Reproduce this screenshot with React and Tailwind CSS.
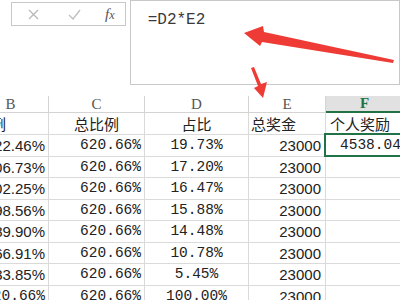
import React from "react";

const mono = { fontFamily: '"Liberation Mono", monospace' };

const rows = [
  { b: "122.46%", d: "19.73%", f: "4538.04" },
  { b: "106.73%", d: "17.20%" },
  { b: "102.25%", d: "16.47%" },
  { b: "98.56%", d: "15.88%" },
  { b: "89.90%", d: "14.48%" },
  { b: "66.91%", d: "10.78%" },
  { b: "33.85%", d: "5.45%" },
  { b: "620.66%", bMono: true, d: "100.00%" },
];
const heights = ["h-[22px]", "h-[21px]", "h-[22px]", "h-[21px]", "h-[22px]", "h-[21px]", "h-[22px]", "h-[22px]"];

export default function App() {
  return (
    <div className="relative w-[400px] h-[300px] overflow-hidden bg-white text-[#222]" style={{ fontFamily: '"Liberation Sans", "Noto Sans CJK SC", sans-serif' }}>
      {/* toolbar */}
      <div className="flex items-start h-[85px]">
        <div className="ml-[11px] mt-[2px] w-[119px] h-[24px] border border-[#c8c8c8] flex items-center">
          <svg className="ml-[16px]" width="11" height="11" viewBox="0 0 11 11">
            <path d="M1 1 L10 10 M10 1 L1 10" stroke="#b8b8b8" strokeWidth="1.3" fill="none" />
          </svg>
          <svg className="ml-[29px]" width="13" height="11" viewBox="0 0 13 11">
            <path d="M1 6 L5 10 L12 1" stroke="#c0c0c0" strokeWidth="1.4" fill="none" />
          </svg>
          <span className="ml-[24px] italic text-[15px] leading-none text-[#555]" style={{ fontFamily: '"Liberation Serif", serif' }}>
            f<span className="text-[12px]">x</span>
          </span>
        </div>
        <div className="ml-[4px] w-[280px] h-[85px] border border-[#c8c8c8] pl-[17px] pt-[6px]">
          <span className="text-[16px] leading-[18px] text-[#3a3a3a]" style={mono}>=D2*E2</span>
        </div>
      </div>

      {/* grid */}
      <div className="mt-[11px] -ml-[27px]">
        <div className="flex h-[17px] text-[15px] leading-none text-[#555]" style={{ fontFamily: '"Liberation Serif", serif' }}>
          <div className="w-[76px] shrink-0 h-full border-r border-b border-[#d4d4d4] flex items-center justify-center">B</div>
          <div className="w-[96px] shrink-0 h-full border-r border-b border-[#d4d4d4] flex items-center justify-center">C</div>
          <div className="w-[104px] shrink-0 h-full border-r border-b border-[#d4d4d4] flex items-center justify-center">D</div>
          <div className="w-[77px] shrink-0 h-full border-r border-b border-[#d4d4d4] flex items-center justify-center">E</div>
          <div className="w-[77px] shrink-0 h-full bg-[#e1e1e1] border-b-2 border-[#217346] flex items-center justify-center font-bold text-[#217346]">F</div>
        </div>

        <div className="flex h-[22px] text-[15px] leading-none" style={{ fontFamily: '"Noto Sans CJK SC", sans-serif' }}>
          <div className="w-[76px] shrink-0 h-full border-r border-b border-[#dadada] flex items-center pl-[3px] whitespace-nowrap">比例</div>
          <div className="w-[96px] shrink-0 h-full border-r border-b border-[#dadada] flex items-center justify-center">总比例</div>
          <div className="w-[104px] shrink-0 h-full border-r border-b border-[#dadada] flex items-center justify-center">占比</div>
          <div className="w-[77px] shrink-0 h-full border-r border-b border-[#dadada] flex items-center pl-[2px]">总奖金</div>
          <div className="w-[77px] shrink-0 h-full border-b border-[#dadada] flex items-center pl-[4px] whitespace-nowrap">个人奖励</div>
        </div>

        {rows.map((r, i) => (
          <div key={i} className={`flex ${heights[i]} leading-none`}>
            <div className="w-[76px] shrink-0 h-full border-r border-b border-[#dadada] flex items-center justify-end pr-[3px] overflow-hidden whitespace-nowrap">
              {r.bMono ? (
                <span className="text-[14.5px]" style={mono}>{r.b}</span>
              ) : (
                <span className="text-[15px]">{r.b}</span>
              )}
            </div>
            <div className="w-[96px] shrink-0 h-full border-r border-b border-[#dadada] flex items-center justify-end pr-[3px]">
              <span className="text-[14.5px]" style={mono}>620.66%</span>
            </div>
            <div className="w-[104px] shrink-0 h-full border-r border-b border-[#dadada] flex items-center justify-center">
              <span className="text-[14.5px]" style={mono}>{r.d}</span>
            </div>
            <div className="w-[77px] shrink-0 h-full border-r border-b border-[#dadada] flex items-center justify-end pr-[4px]">
              <span className="text-[15px]">23000</span>
            </div>
            <div className="relative w-[77px] shrink-0 h-full border-b border-[#dadada] flex items-center pl-[14px] whitespace-nowrap">
              {r.f && <span className="text-[14.5px]" style={mono}>{r.f}</span>}
              {i === 0 && <div className="absolute -left-[2px] -top-[2px] -right-[2px] -bottom-[1px] border-2 border-[#217346]" />}
            </div>
          </div>
        ))}
      </div>

      {/* red arrows */}
      <svg className="absolute left-0 top-0 pointer-events-none" width="400" height="300" viewBox="0 0 400 300">
        <polygon points="244,33 263,26 264,32 394,60 393,63 262,42 260,46" fill="#ee3b36" />
        <polygon points="251,68 254,67 261,84 267,82 263,98 254,88 258,86" fill="#ee3b36" />
      </svg>
    </div>
  );
}
